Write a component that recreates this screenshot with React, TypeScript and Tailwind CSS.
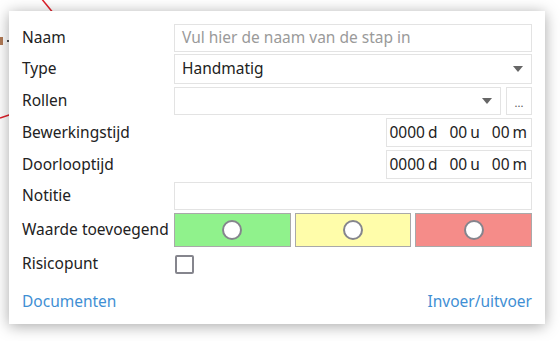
import { useState } from "react";

function Arrow() {
  return (
    <svg width="10" height="6" viewBox="0 0 10 6" className="shrink-0">
      <path d="M0 0h10L5 6z" fill="#666" />
    </svg>
  );
}

function Field({ children, className = "" }: { children?: React.ReactNode; className?: string }) {
  return (
    <div className={`h-[28px] border border-[#e3e3e3] flex items-center px-[7px] ${className}`}>
      {children}
    </div>
  );
}

function TimeField() {
  return (
    <div className="h-[29px] w-[146px] ml-auto border border-[#e3e3e3] flex items-center justify-end pr-[4px] text-[15.5px] text-[#222]">
      <span>0000</span>
      <span className="ml-[3px]">d</span>
      <span className="ml-[12px]">00</span>
      <span className="ml-[3px]">u</span>
      <span className="ml-[12px]">00</span>
      <span className="ml-[3px]">m</span>
    </div>
  );
}

function Radio({ bg }: { bg: string }) {
  return (
    <div className={`flex-1 h-[34px] border border-[#a9a9a9] flex items-center justify-center ${bg}`}>
      <span className="block w-[20px] h-[20px] rounded-full bg-white border-[2.5px] border-[#85858d]"></span>
    </div>
  );
}

export default function App() {
  const [risico, setRisico] = useState(false);

  const labels = "w-[152px] shrink-0 text-[15.5px] text-[#222]";

  return (
    <div className="relative w-[560px] h-[341px] bg-white overflow-hidden font-['Noto_Sans',sans-serif]">
      {/* diagram behind the popup */}
      <svg className="absolute inset-0" width="560" height="341">
        <line x1="41" y1="-2" x2="54" y2="14" stroke="#e0202a" strokeWidth="1.5" />
        <line x1="0" y1="118" x2="12" y2="114" stroke="#e0202a" strokeWidth="1.5" />
        <rect x="0" y="37" width="3" height="8" fill="#b07a55" />
        <rect x="7" y="40" width="2" height="2" fill="#555" />
      </svg>

      <div className="relative ml-[9px] mt-[11px] w-[536px] h-[313px] bg-white shadow-[0_2px_14px_rgba(0,0,0,0.35)] pt-[13px] px-[13px]">
        <div className="flex flex-col gap-[3px]">
          <div className="flex items-center -mb-[1px]">
            <div className={labels}>Naam</div>
            <Field className="flex-1 h-[27px] text-[15.5px] text-[#9a9a9a]">Vul hier de naam van de stap in</Field>
          </div>
          <div className="flex items-center">
            <div className={labels}>Type</div>
            <Field className="flex-1 h-[30px] text-[15.5px] text-[#222] justify-between pr-[8px]">
              <span>Handmatig</span>
              <Arrow />
            </Field>
          </div>
          <div className="flex items-center">
            <div className={labels}>Rollen</div>
            <Field className="flex-1 justify-end pr-[8px]">
              <Arrow />
            </Field>
            <div className="ml-[5px] w-[26px] h-[28px] border border-[#e3e3e3] flex items-end justify-center pb-[6px] text-[11px] leading-none text-[#555]">
              ...
            </div>
          </div>
          <div className="flex items-center">
            <div className={labels}>Bewerkingstijd</div>
            <TimeField />
          </div>
          <div className="flex items-center">
            <div className={labels}>Doorlooptijd</div>
            <TimeField />
          </div>
          <div className="flex items-center">
            <div className={labels}>Notitie</div>
            <Field className="flex-1 h-[27px]" />
          </div>
          <div className="flex items-center">
            <div className={labels}>Waarde toevoegend</div>
            <div className="flex-1 flex gap-[4px]">
              <Radio bg="bg-[#90f28c]" />
              <Radio bg="bg-[#fffdaa]" />
              <Radio bg="bg-[#f58c89]" />
            </div>
          </div>
          <div className="flex items-center h-[28px]">
            <div className={labels}>Risicopunt</div>
            <button
              onClick={() => setRisico(!risico)}
              className="w-[19px] h-[19px] ml-[1px] border-2 border-[#85858d] rounded-[2px] bg-white flex items-center justify-center text-[12px] text-[#333]"
            >
              {risico ? "✓" : ""}
            </button>
          </div>
        </div>

        <div className="flex justify-between mt-[12px] text-[15.5px] text-[#3f8fd4]">
          <a href="#">Documenten</a>
          <a href="#">Invoer/uitvoer</a>
        </div>
      </div>
    </div>
  );
}
